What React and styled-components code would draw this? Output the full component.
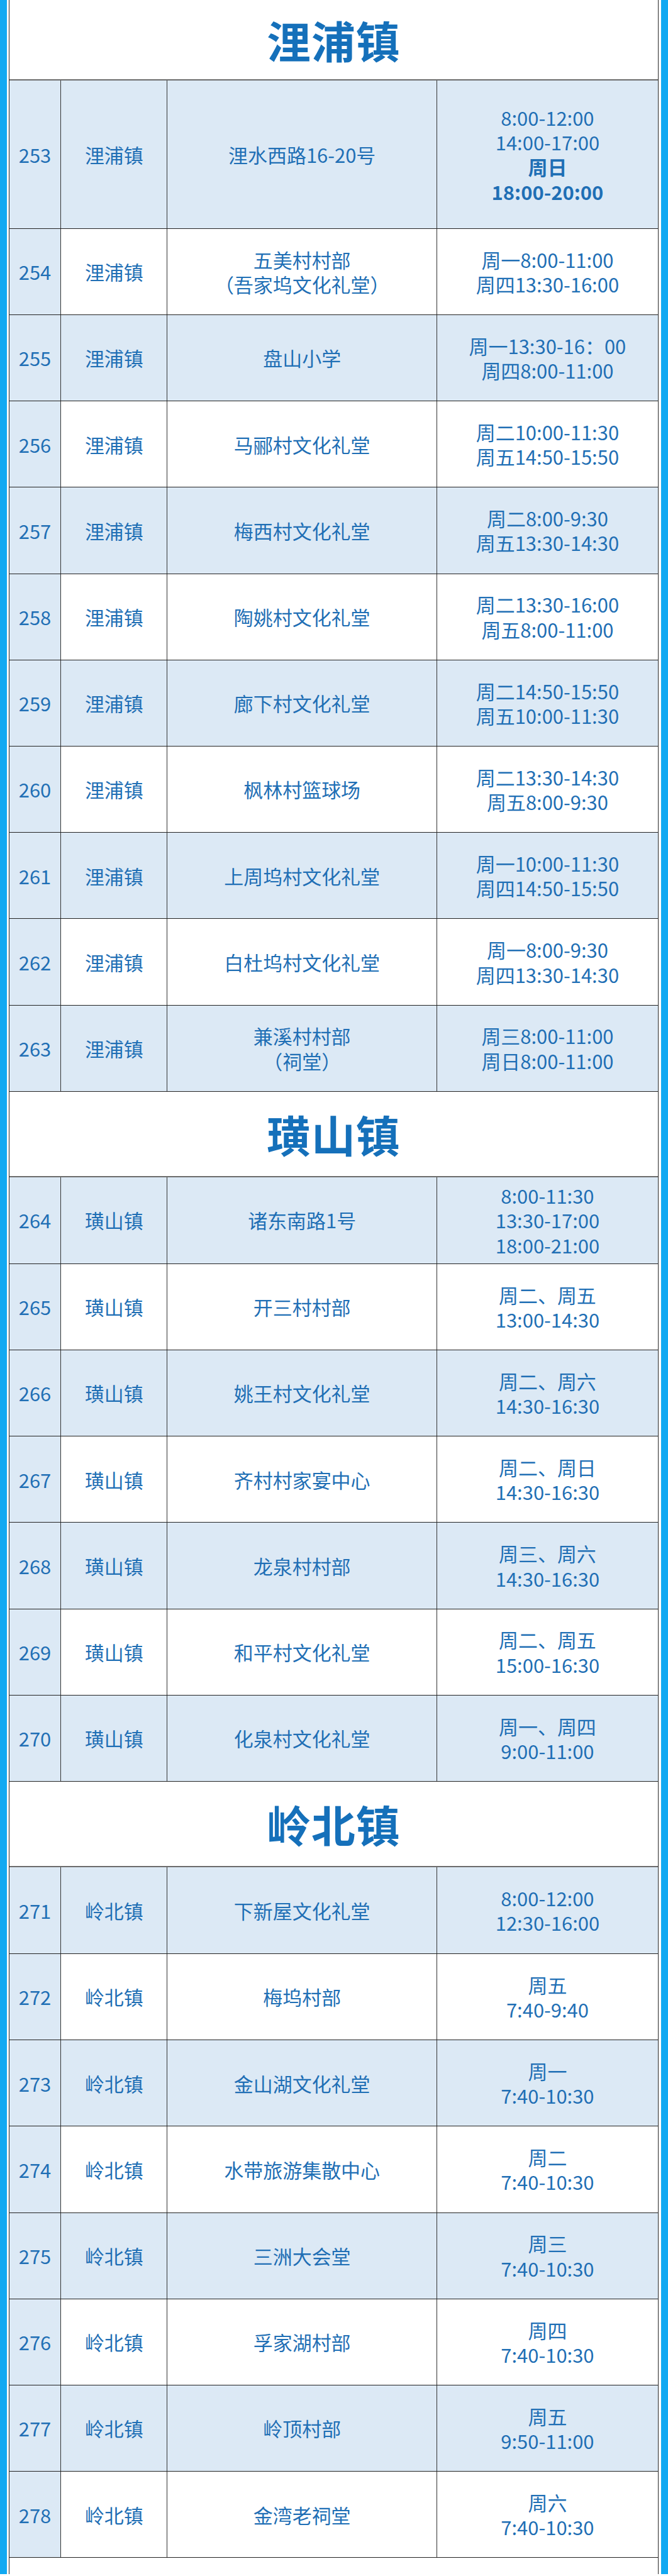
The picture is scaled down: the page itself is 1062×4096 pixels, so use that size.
import React from "react";
import styled, { createGlobalStyle } from "styled-components";

// reference was drawn at 1080 wide, the window is 1062
const u = v => `${(v * 0.983).toFixed(2)}px`;

const GlobalStyle = createGlobalStyle`
  html, body {
    margin: 0;
    padding: 0;
    background: #ffffff;
  }
  body {
    font-family: "Noto Sans CJK SC", "Noto Sans", sans-serif;
  }
`;

const Frame = styled.div`
  width: ${u(1080)};
  background: #12a9f2;
  padding: 0 ${u(11)};
  box-sizing: border-box;
`;

const Sheet = styled.div`
  background: #ffffff;
  padding: 0 ${u(4)} 0 ${u(3)};
`;

const Table = styled.div`
  border-left: 1px solid #2a2a2a;
  border-right: 1px solid #2a2a2a;
`;

const TownTitle = styled.div`
  height: ${props => u(props.$h)};
  display: flex;
  align-items: center;
  justify-content: center;
  font-size: ${u(71)};
  font-weight: 700;
  color: #1570ba;
  letter-spacing: ${u(1)};
  border-top: ${props => (props.$first ? "none" : "1.5px solid #222")};
  border-bottom: 2px solid #6b6b6b;
  box-sizing: border-box;
`;

const Row = styled.div`
  display: grid;
  grid-template-columns: ${u(83)} ${u(172)} ${u(436)} 1fr;
  height: ${props => u(props.$h)};
  background: ${props => (props.$shade ? "#dce9f5" : "#ffffff")};
  border-top: ${props => (props.$afterTitle ? "none" : "1.5px solid #222")};
  box-sizing: border-box;
`;

const Cell = styled.div`
  display: flex;
  flex-direction: column;
  align-items: center;
  justify-content: center;
  text-align: center;
  color: #1f6fb5;
  font-size: ${u(31.5)};
  line-height: ${u(40)};
  background: ${props => (props.$num ? "#dce9f5" : "transparent")};
  border-left: ${props => (props.$num ? "none" : "1px solid #333")};
`;

const Line = styled.span`
  display: block;
  white-space: nowrap;
  font-weight: ${props => (props.$bold ? 700 : 400)};
`;

const Tail = styled.div`
  height: ${u(27)};
  border-top: 1.5px solid #222;
  box-sizing: border-box;
`;

const sections = [
  {
    town: "浬浦镇",
    titleH: 130,
    first: true,
    rows: [
      { n: 253, place: ["浬水西路16-20号"], time: ["8:00-12:00", "14:00-17:00", { t: "周日", b: true }, { t: "18:00-20:00", b: true }], h: 239 },
      { n: 254, place: ["五美村村部", "（吾家坞文化礼堂）"], time: ["周一8:00-11:00", "周四13:30-16:00"] },
      { n: 255, place: ["盘山小学"], time: ["周一13:30-16：00", "周四8:00-11:00"] },
      { n: 256, place: ["马郦村文化礼堂"], time: ["周二10:00-11:30", "周五14:50-15:50"] },
      { n: 257, place: ["梅西村文化礼堂"], time: ["周二8:00-9:30", "周五13:30-14:30"] },
      { n: 258, place: ["陶姚村文化礼堂"], time: ["周二13:30-16:00", "周五8:00-11:00"] },
      { n: 259, place: ["廊下村文化礼堂"], time: ["周二14:50-15:50", "周五10:00-11:30"] },
      { n: 260, place: ["枫林村篮球场"], time: ["周二13:30-14:30", "周五8:00-9:30"] },
      { n: 261, place: ["上周坞村文化礼堂"], time: ["周一10:00-11:30", "周四14:50-15:50"] },
      { n: 262, place: ["白杜坞村文化礼堂"], time: ["周一8:00-9:30", "周四13:30-14:30"] },
      { n: 263, place: ["兼溪村村部", "（祠堂）"], time: ["周三8:00-11:00", "周日8:00-11:00"] },
    ],
  },
  {
    town: "璜山镇",
    titleH: 139,
    rows: [
      { n: 264, place: ["诸东南路1号"], time: ["8:00-11:30", "13:30-17:00", "18:00-21:00"] },
      { n: 265, place: ["开三村村部"], time: ["周二、周五", "13:00-14:30"] },
      { n: 266, place: ["姚王村文化礼堂"], time: ["周二、周六", "14:30-16:30"] },
      { n: 267, place: ["齐村村家宴中心"], time: ["周二、周日", "14:30-16:30"] },
      { n: 268, place: ["龙泉村村部"], time: ["周三、周六", "14:30-16:30"] },
      { n: 269, place: ["和平村文化礼堂"], time: ["周二、周五", "15:00-16:30"] },
      { n: 270, place: ["化泉村文化礼堂"], time: ["周一、周四", "9:00-11:00"] },
    ],
  },
  {
    town: "岭北镇",
    titleH: 139,
    rows: [
      { n: 271, place: ["下新屋文化礼堂"], time: ["8:00-12:00", "12:30-16:00"] },
      { n: 272, place: ["梅坞村部"], time: ["周五", "7:40-9:40"] },
      { n: 273, place: ["金山湖文化礼堂"], time: ["周一", "7:40-10:30"] },
      { n: 274, place: ["水带旅游集散中心"], time: ["周二", "7:40-10:30"] },
      { n: 275, place: ["三洲大会堂"], time: ["周三", "7:40-10:30"] },
      { n: 276, place: ["孚家湖村部"], time: ["周四", "7:40-10:30"] },
      { n: 277, place: ["岭顶村部"], time: ["周五", "9:50-11:00"] },
      { n: 278, place: ["金湾老祠堂"], time: ["周六", "7:40-10:30"] },
    ],
  },
];

function Lines({ items }) {
  return items.map((item, i) =>
    typeof item === "string" ? (
      <Line key={i}>{item}</Line>
    ) : (
      <Line key={i} $bold={item.b}>{item.t}</Line>
    )
  );
}

export default function App() {
  return (
    <>
      <GlobalStyle />
      <Frame>
        <Sheet>
          <Table>
            {sections.map(section => (
              <React.Fragment key={section.town}>
                <TownTitle $h={section.titleH} $first={section.first}>
                  {section.town}
                </TownTitle>
                {section.rows.map((row, i) => (
                  <Row key={row.n} $h={row.h || 139.6} $shade={i % 2 === 0} $afterTitle={i === 0}>
                    <Cell $num>{row.n}</Cell>
                    <Cell>{section.town}</Cell>
                    <Cell>
                      <Lines items={row.place} />
                    </Cell>
                    <Cell>
                      <Lines items={row.time} />
                    </Cell>
                  </Row>
                ))}
              </React.Fragment>
            ))}
            <Tail />
          </Table>
        </Sheet>
      </Frame>
    </>
  );
}
